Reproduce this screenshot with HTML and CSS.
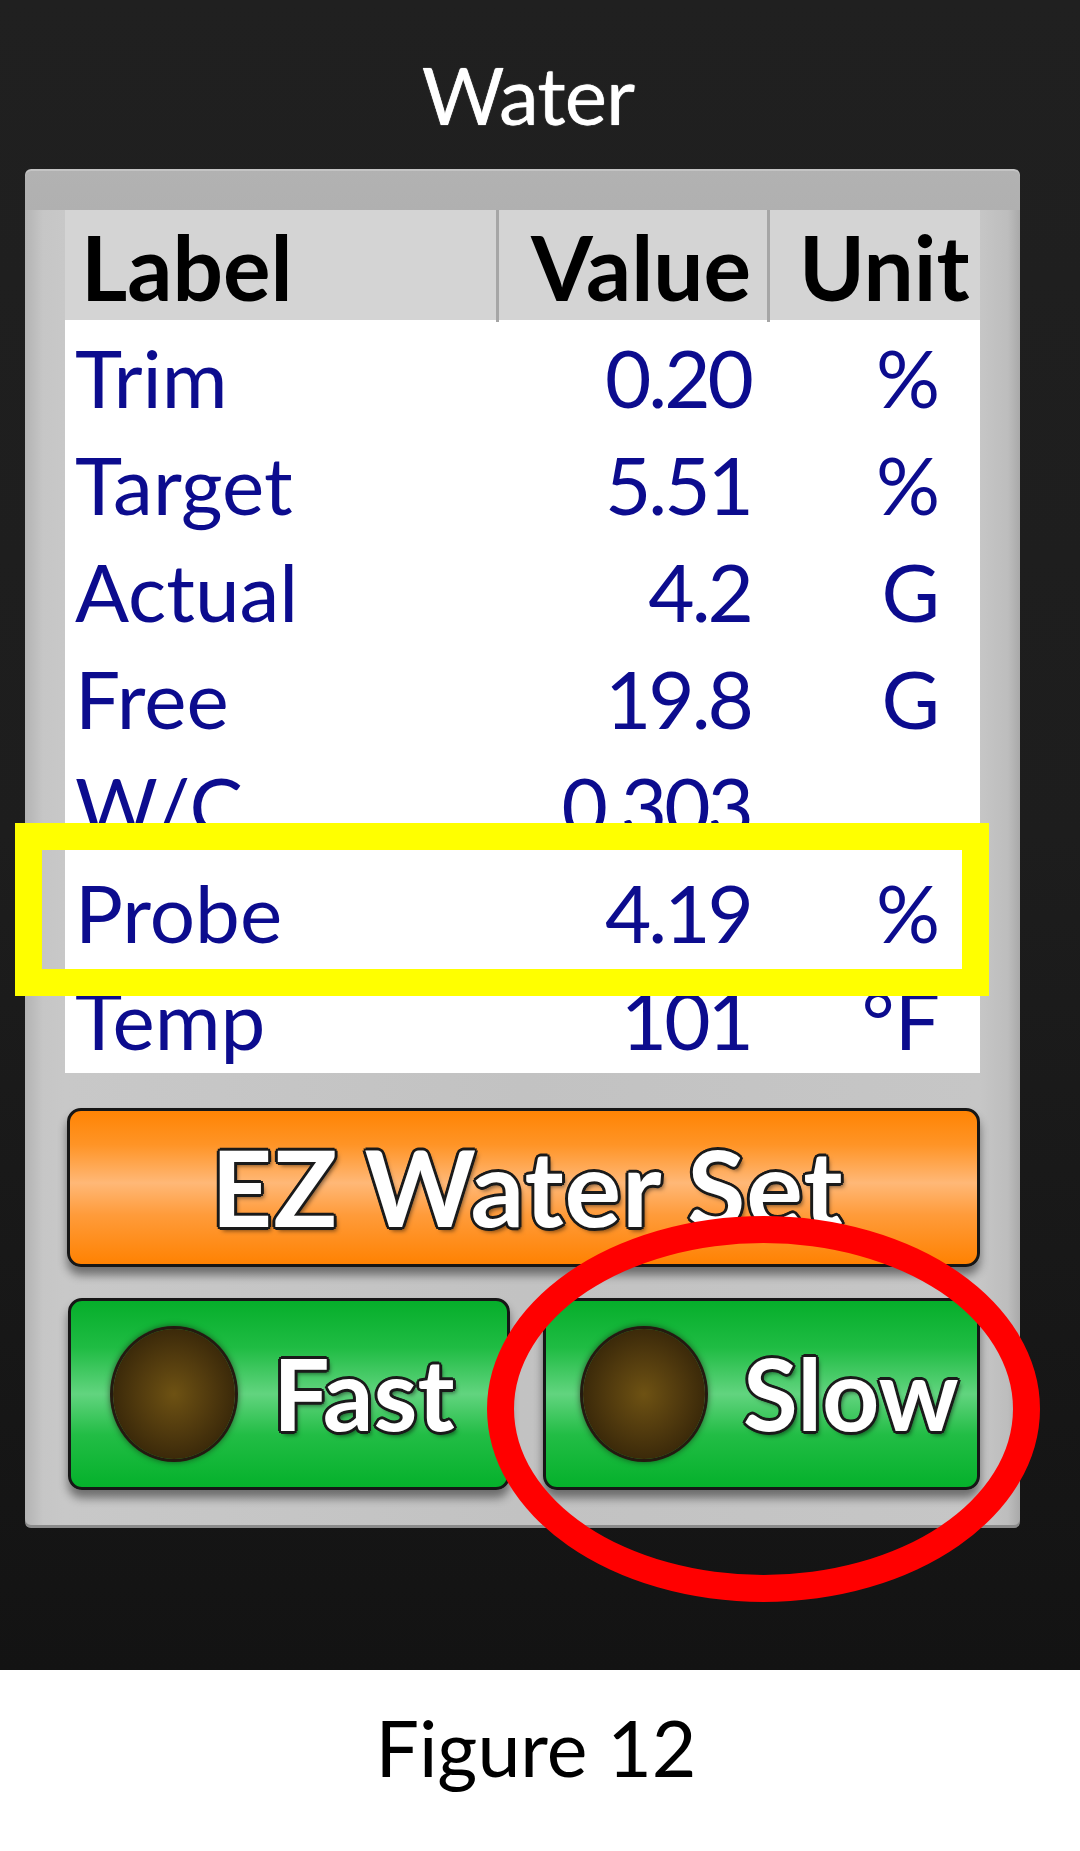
FILE: index.html
```html
<!DOCTYPE html>
<html>
<head>
<meta charset="utf-8">
<link rel="stylesheet" href="styles.css">
</head>
<body>
<div class="screen">
  <div class="title">Water</div>
  <div class="panel">
    <div class="table">
      <div class="thead">
        <div class="th c-label">Label</div>
        <div class="th c-value">Value</div>
        <div class="th c-unit">Unit</div>
      </div>
      <div class="tbody">
        <div class="tr"><div class="td c-label">Trim</div><div class="td c-value">0.20</div><div class="td c-unit">%</div></div>
        <div class="tr"><div class="td c-label">Target</div><div class="td c-value">5.51</div><div class="td c-unit">%</div></div>
        <div class="tr"><div class="td c-label">Actual</div><div class="td c-value">4.2</div><div class="td c-unit">G</div></div>
        <div class="tr"><div class="td c-label">Free</div><div class="td c-value">19.8</div><div class="td c-unit">G</div></div>
        <div class="tr"><div class="td c-label">W/C</div><div class="td c-value">0.303</div><div class="td c-unit"></div></div>
        <div class="tr"><div class="td c-label">Probe</div><div class="td c-value">4.19</div><div class="td c-unit">%</div></div>
        <div class="tr"><div class="td c-label">Temp</div><div class="td c-value">101</div><div class="td c-unit">°F</div></div>
      </div>
    </div>
    <div class="btn btn-orange">EZ Water Set</div>
    <div class="btn-row">
      <div class="btn btn-green btn-fast"><span class="led"></span><span class="btn-text">Fast</span></div>
      <div class="btn btn-green btn-slow"><span class="led"></span><span class="btn-text">Slow</span></div>
    </div>
  </div>
  <div class="mark-yellow"></div>
  <div class="mark-red"></div>
</div>
<div class="caption">Figure 12</div>
</body>
</html>
```

FILE: styles.css
```css
html, body {
  margin: 0;
  padding: 0;
  background: #ffffff;
}

body {
  width: 1080px;
  font-family: Lato, "DejaVu Sans", sans-serif;
}

.screen {
  position: relative;
  height: 1670px;
  background: linear-gradient(to bottom, #202020 0%, #1d1d1d 50%, #131313 100%);
  padding-left: 25px;
  box-sizing: border-box;
  overflow: hidden;
}

.title {
  width: 1010px;
  text-align: center;
  color: #ffffff;
  font-size: 80px;
  line-height: 96px;
  padding-top: 46px;
  margin-left: -25px;
  padding-left: 23px;
  text-shadow: 0 0 1px #ffffff;
  letter-spacing: -1px;
}

.panel {
  margin-top: 27px;
  width: 995px;
  height: 1359px;
  box-sizing: border-box;
  padding: 41px 40px 0 40px;
  border-radius: 6px;
  background:
    linear-gradient(to bottom, #b2b2b2 0, #b0b0b0 41px, transparent 41px),
    linear-gradient(to right, #b3b3b3 0, #c6c6c6 18px, #c8c8c8 40px, #c2c2c2 50%, #c6c6c6 calc(100% - 40px), #bdbdbd calc(100% - 12px), #a9a9a9 100%);
  box-shadow: inset 0 2px 0 #c4c4c4, inset 0 -3px 0 #8a8a8a;
}

.table {
  width: 915px;
  background: #ffffff;
}

.thead {
  display: grid;
  grid-template-columns: 431px 271px 213px;
  height: 110px;
  background: #d4d4d4;
}

.th {
  font-weight: 700;
  font-size: 89px;
  line-height: 110px;
  padding-top: 2px;
  color: #000000;
  box-sizing: border-box;
}

.tbody {
  padding-top: 4px;
  height: 753px;
  box-sizing: border-box;
  overflow: hidden;
}

.tr {
  display: grid;
  grid-template-columns: 431px 271px 213px;
  height: 107px;
}

.td {
  font-size: 80px;
  line-height: 107px;
  color: #0c0c8e;
  white-space: nowrap;
}

.th.c-label { padding-left: 16px; }
.th.c-value { border-left: 3px solid #a6a6a6; text-align: right; padding-right: 16px; }
.th.c-unit { border-left: 3px solid #a6a6a6; padding-left: 29px; }

.td.c-label { padding-left: 10px; }
.td.c-value { text-align: right; padding-right: 16px; letter-spacing: -3px; }
.td.c-unit { text-align: right; padding-right: 40px; }

.btn {
  box-sizing: border-box;
  border: 3px solid #161616;
  border-radius: 14px;
  color: #ffffff;
  font-weight: 700;
  text-shadow:
    3px 0 0 #1a1a1a, -3px 0 0 #1a1a1a, 0 3px 0 #1a1a1a, 0 -3px 0 #1a1a1a,
    2px 2px 0 #1a1a1a, -2px -2px 0 #1a1a1a, 2px -2px 0 #1a1a1a, -2px 2px 0 #1a1a1a,
    3px 4px 4px rgba(0, 0, 0, 0.5);
  box-shadow: 0 8px 10px rgba(0, 0, 0, 0.45);
}

.btn-orange {
  margin-top: 35px;
  margin-left: 2px;
  width: 913px;
  height: 159px;
  background: linear-gradient(to bottom, #ff8404 0%, #ff9426 22%, #ffb877 47%, #ff9b3a 68%, #ff8202 100%);
  font-size: 106px;
  line-height: 150px;
  text-align: center;
  letter-spacing: 1px;
  padding-left: 8px;
}

.btn-row {
  display: flex;
  gap: 33px;
  margin-top: 31px;
  margin-left: 3px;
}

.btn-green {
  height: 192px;
  background: linear-gradient(to bottom, #06ae2b 0%, #1fbc43 25%, #62d47f 50%, #22bd45 72%, #05b12b 100%);
  display: flex;
  align-items: center;
  font-size: 100px;
}

.btn-fast { width: 442px; padding-left: 42px; }
.btn-slow { width: 437px; padding-left: 37px; }

.led {
  flex: none;
  width: 122px;
  height: 130px;
  border-radius: 50%;
  background: radial-gradient(ellipse at 50% 50%, #6e5213 0%, #523b0e 40%, #382709 75%, #2a1d08 100%);
  box-shadow: 0 0 0 3px #241a10, 0 0 6px 3px rgba(20, 15, 10, 0.6);
  margin-right: 38px;
}

.btn-text {
  line-height: 1;
  padding-bottom: 4px;
}

.mark-yellow {
  position: absolute;
  left: 15px;
  top: 823px;
  width: 974px;
  height: 173px;
  box-sizing: border-box;
  border: 27px solid #ffff00;
}

.mark-red {
  position: absolute;
  left: 487px;
  top: 1216px;
  width: 553px;
  height: 386px;
  box-sizing: border-box;
  border: 27px solid #ff0000;
  border-radius: 50%;
}

.caption {
  height: 181px;
  box-sizing: border-box;
  padding-top: 31px;
  text-align: center;
  font-size: 77px;
  line-height: 92px;
  color: #000000;
  padding-right: 8px;
}
```
